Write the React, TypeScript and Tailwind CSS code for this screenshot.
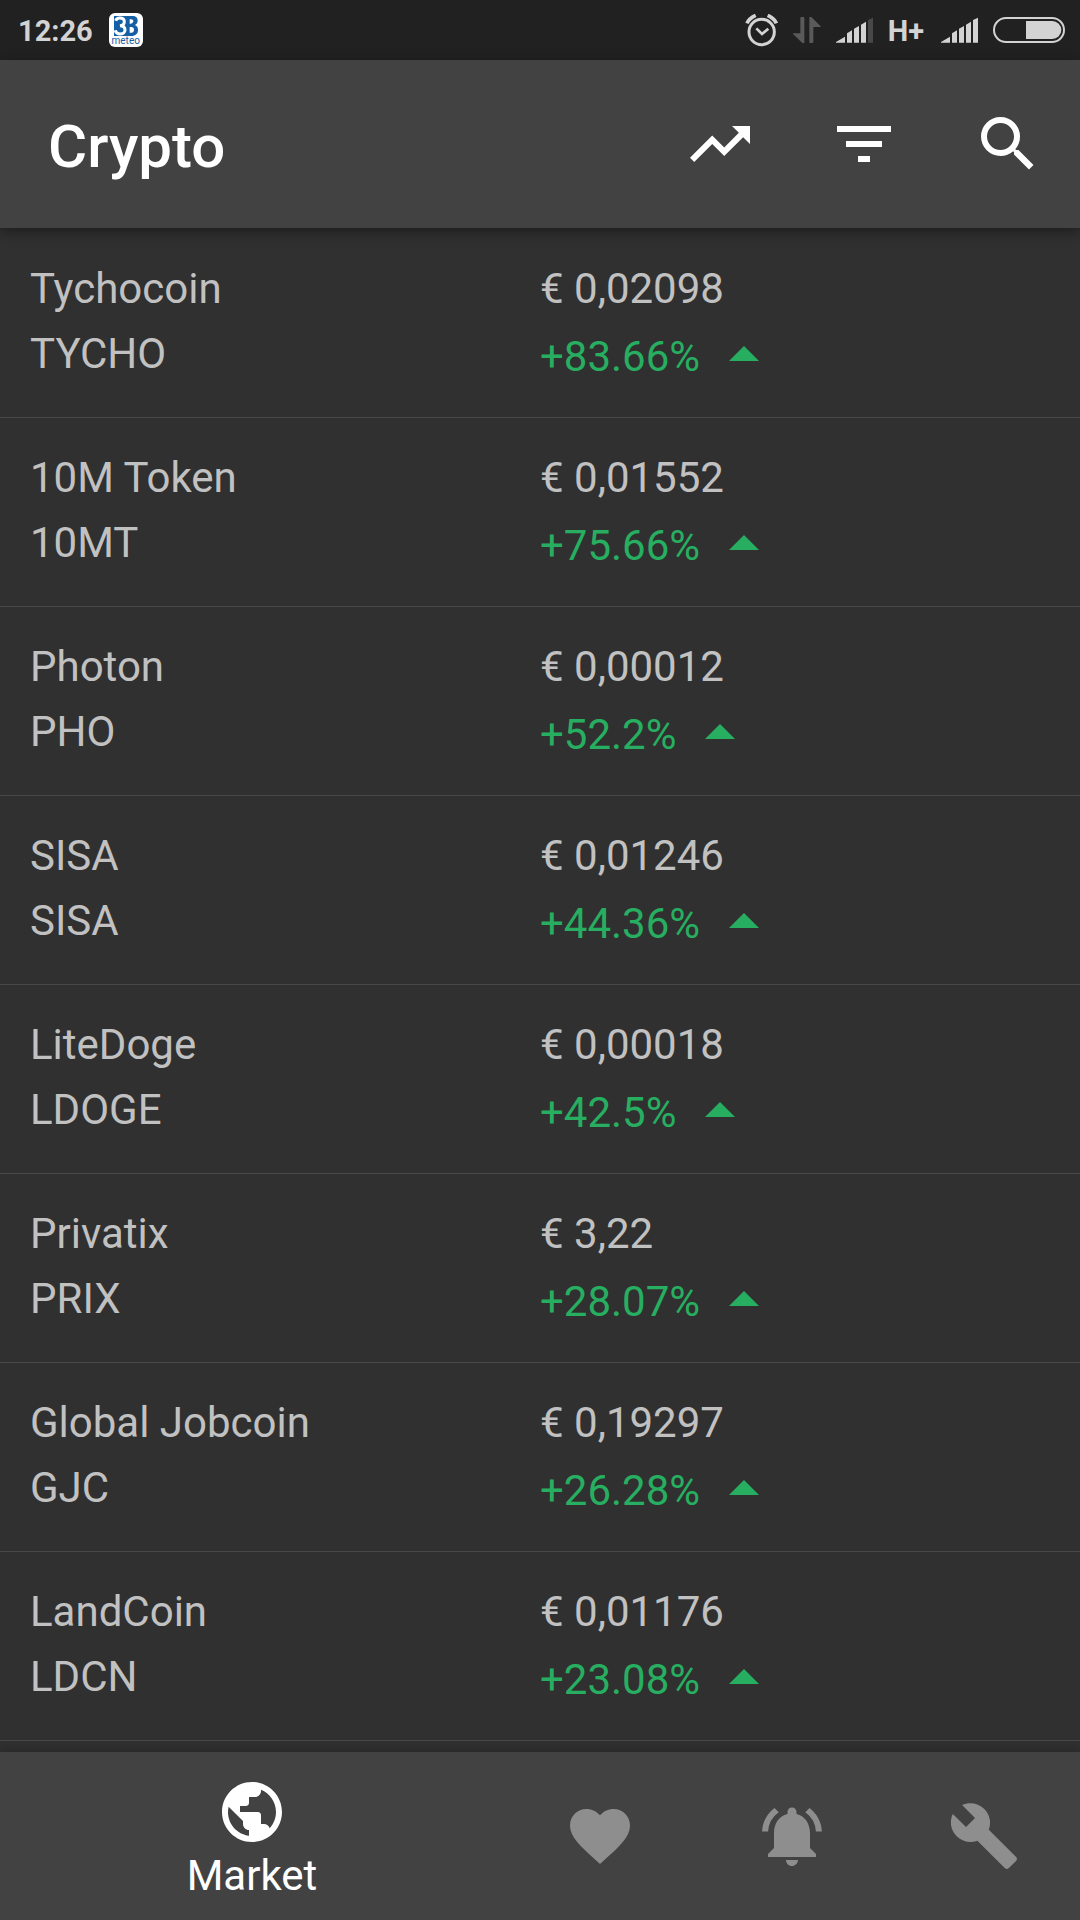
import React from "react";
import {
  MdArrowDropUp,
  MdBuild,
  MdFavorite,
  MdFilterList,
  MdNotificationsActive,
  MdPublic,
  MdSearch,
  MdTrendingUp,
} from "react-icons/md";

type Coin = { name: string; symbol: string; price: string; change: string };

const coins: Coin[] = [
  { name: "Tychocoin", symbol: "TYCHO", price: "€ 0,02098", change: "+83.66%" },
  { name: "10M Token", symbol: "10MT", price: "€ 0,01552", change: "+75.66%" },
  { name: "Photon", symbol: "PHO", price: "€ 0,00012", change: "+52.2%" },
  { name: "SISA", symbol: "SISA", price: "€ 0,01246", change: "+44.36%" },
  { name: "LiteDoge", symbol: "LDOGE", price: "€ 0,00018", change: "+42.5%" },
  { name: "Privatix", symbol: "PRIX", price: "€ 3,22", change: "+28.07%" },
  { name: "Global Jobcoin", symbol: "GJC", price: "€ 0,19297", change: "+26.28%" },
  { name: "LandCoin", symbol: "LDCN", price: "€ 0,01176", change: "+23.08%" },
];

function MeteoLogo() {
  return (
    <span className="flex h-[34px] w-[34px] flex-col items-center rounded-md bg-white pt-[3px] text-[#1560a4]">
      <svg viewBox="0 0 72 60" className="h-5 w-6" aria-hidden="true">
        <path fill="currentColor" d="M0 0h54c13 0 17 6 17 14 0 7-4 11-9 13 7 2 10 7 10 15 0 11-7 18-20 18H0z" />
        <path
          fill="none"
          stroke="#fff"
          strokeWidth="9"
          d="M5 14c2-6 7-8 12-8 9 0 14 4 14 11s-5 11-13 12c10 0 15 6 15 13 0 8-7 12-15 12S5 50 4 43"
        />
        <path fill="#fff" d="M47 10h4c5 0 7 3 7 6s-3 7-7 7h-4zM47 33h5c5 0 8 3 8 8s-3 9-8 9h-5z" />
      </svg>
      <span className="text-[10px] leading-[9px] font-normal">meteo</span>
    </span>
  );
}

function AlarmIcon() {
  return (
    <svg viewBox="52 39 99 99" className="h-[33px] w-[33px]" fill="none" stroke="currentColor" aria-hidden="true">
      <circle cx="102" cy="93" r="38" strokeWidth="9" />
      <path d="M86 82l17 17 19-16" strokeWidth="8" />
      <path d="M58 67c4-10 13-18 26-24M146 67c-4-10-13-18-26-24" strokeWidth="11" />
    </svg>
  );
}

function DataArrowsIcon() {
  return (
    <svg viewBox="194 48 84 84" className="h-7 w-7 text-[#5a5a5a]" fill="currentColor" aria-hidden="true">
      <path d="M216 54q0-3 3-3h6q3 0 3 3v75h-6l-28-27v-2h22zM243 51h6l28 28v2h-22v45q0 3-3 3h-6q-3 0-3-3z" />
    </svg>
  );
}

function SignalIcon({ weak = false }: { weak?: boolean }) {
  return (
    <svg viewBox="0 0 111 78" className="h-[26px] w-[37px]" fill="currentColor" aria-hidden="true">
      <path d="M0 75L27 59v18H0zM33 49l15-9v37H33zM54 35l15-8v50H54zM75 23l15-9v63H75z" />
      <path d="M96 9l15-7v75H96z" className={weak ? "text-[#484848]" : ""} fill="currentColor" />
    </svg>
  );
}

function BatteryIcon() {
  return (
    <svg viewBox="0 0 216 78" className="h-[26px] w-[72px]" aria-hidden="true">
      <rect x="3" y="3" width="210" height="72" rx="36" fill="none" stroke="currentColor" strokeWidth="6" />
      <path d="M99 12h79a27 27 0 0 1 0 54H99z" fill="currentColor" />
    </svg>
  );
}

function StatusBar() {
  return (
    <div className="flex h-[60px] shrink-0 items-center justify-between bg-[#212121] px-[15px] text-[29px] leading-9 font-bold text-[#d3d3d3]">
      <div className="flex items-center gap-4 pl-[3px]">
        <span className="pt-0.5">12:26</span>
        <MeteoLogo />
      </div>
      <div className="flex items-center gap-[15px]">
        <AlarmIcon />
        <DataArrowsIcon />
        <SignalIcon weak />
        <span className="pt-0.5 pr-0.5">H+</span>
        <SignalIcon />
        <BatteryIcon />
      </div>
    </div>
  );
}

function CoinRow({ coin }: { coin: Coin }) {
  return (
    <li className="grid grid-cols-2 items-start border-b border-[#484848] pt-[27px] pb-[25px] text-[42px] leading-[65px] text-[#c1c1c1]">
      <div className="flex flex-col pl-[30px]">
        <span>{coin.name}</span>
        <span>{coin.symbol}</span>
      </div>
      <div className="flex flex-col">
        <span>{coin.price}</span>
        <span className="flex h-[71px] items-center text-[#27ae60]">
          {coin.change}
          <MdArrowDropUp className="mb-1 ml-2 size-[72px]" aria-hidden="true" />
        </span>
      </div>
    </li>
  );
}

const actions = [
  { label: "Trending", Icon: MdTrendingUp },
  { label: "Filter", Icon: MdFilterList },
  { label: "Search", Icon: MdSearch },
];

const tabs = [
  { label: "Favorites", Icon: MdFavorite },
  { label: "Alerts", Icon: MdNotificationsActive },
  { label: "Settings", Icon: MdBuild },
];

export default function App() {
  return (
    <div className="flex h-screen flex-col overflow-hidden bg-[#303030] font-[Roboto,sans-serif]">
      <StatusBar />
      <header className="relative z-10 flex h-[168px] shrink-0 items-center justify-between bg-[#424242] pl-12 text-white shadow-[0_4px_12px_rgba(0,0,0,0.4)]">
        <h1 className="pt-1.5 text-[60px] leading-[72px] font-medium">Crypto</h1>
        <div className="flex">
          {actions.map(({ label, Icon }) => (
            <button key={label} type="button" aria-label={label} className="flex h-36 w-36 items-center justify-center">
              <Icon className="size-[72px]" />
            </button>
          ))}
        </div>
      </header>
      <main className="min-h-0 flex-1 overflow-x-hidden overflow-y-auto pt-px">
        <ul>
          {coins.map((coin) => (
            <CoinRow key={coin.symbol} coin={coin} />
          ))}
        </ul>
      </main>
      <nav className="relative z-10 grid h-[168px] shrink-0 grid-cols-[21fr_8fr_8fr_8fr] bg-[#424242] shadow-[0_0_12px_rgba(0,0,0,0.25)]">
        <button type="button" aria-current="page" className="flex flex-col items-center pt-6 text-[42px] leading-[56px] text-white">
          <MdPublic className="size-[72px]" aria-hidden="true" />
          <span>Market</span>
        </button>
        {tabs.map(({ label, Icon }) => (
          <button key={label} type="button" aria-label={label} className="flex items-center justify-center text-[#8e8e8e]">
            <Icon className="size-[72px]" />
          </button>
        ))}
      </nav>
    </div>
  );
}
